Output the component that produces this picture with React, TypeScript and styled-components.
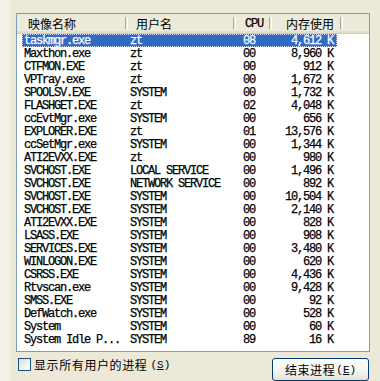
import React from "react";
import styled, { createGlobalStyle } from "styled-components";

const GlobalStyle = createGlobalStyle`
  html, body {
    margin: 0;
    padding: 0;
    background: #ece9d8;
  }
`;

const mono = `"Liberation Mono", "Noto Sans CJK SC", monospace`;
const cjk = `"Noto Sans CJK SC", "Liberation Sans", sans-serif`;

const Page = styled.div`
  width: 380px;
  height: 381px;
  box-sizing: border-box;
  padding: 13px 11px 0 16px;
  overflow: hidden;
  background: linear-gradient(to right, #f3f2ea 0, #f3f2ea 9px, #ece9d8 11px);
  display: flex;
  flex-direction: column;
`;

const ListBox = styled.div`
  width: 354px;
  height: 343px;
  box-sizing: border-box;
  border: 1px solid #7f9db9;
  background: #ffffff;
  display: flex;
  flex-direction: column;
`;

const Header = styled.div`
  height: 20px;
  box-sizing: border-box;
  display: flex;
  align-items: stretch;
  background: #ebeadb;
  border-bottom: 1px solid #d0cdbd;
  box-shadow: inset 0 -2px 0 #e2dfcf;
`;

const HeaderCell = styled.div<{ $w: number; $pad: number; $right?: boolean }>`
  width: ${(p) => p.$w}px;
  box-sizing: border-box;
  padding: ${(p) => (p.$right ? `0 ${p.$pad}px 0 0` : `0 0 0 ${p.$pad}px`)};
  display: flex;
  align-items: center;
  justify-content: ${(p) => (p.$right ? "flex-end" : "flex-start")};
  font-family: ${cjk};
  font-size: 12px;
  color: #000;
  white-space: nowrap;
`;

const MonoLabel = styled.span`
  font-family: ${mono};
  font-size: 12px;
  letter-spacing: -1.2px;
  -webkit-text-stroke: 0.25px #000;
`;

const Divider = styled.div`
  width: 1px;
  margin: 3px 0 4px;
  border-left: 1px solid #aca899;
  border-right: 1px solid #ffffff;
`;

const Rows = styled.div`
  display: flex;
  flex-direction: column;
`;

const Row = styled.div<{ $selected?: boolean }>`
  margin-left: 5px;
  width: 315px;
  height: 13px;
  box-sizing: border-box;
  display: flex;
  align-items: center;
  background: ${(p) => (p.$selected ? "#316ac5" : "transparent")};
  color: ${(p) => (p.$selected ? "#ffffff" : "#000000")};
  outline: ${(p) => (p.$selected ? "1px dotted #c9d6ee" : "none")};
  outline-offset: -1px;
  font-family: ${mono};
  font-size: 12px;
  letter-spacing: -1.2px;
  line-height: 13px;
  padding-top: 1px;
  -webkit-text-stroke: 0.25px ${(p) => (p.$selected ? "#ffffff" : "#000000")};
`;

const Cell = styled.div<{ $w: number; $pad: number; $right?: boolean }>`
  width: ${(p) => p.$w}px;
  box-sizing: border-box;
  padding: ${(p) => (p.$right ? `0 ${p.$pad}px 0 0` : `0 0 0 ${p.$pad}px`)};
  text-align: ${(p) => (p.$right ? "right" : "left")};
  white-space: pre;
  overflow: hidden;
`;

const Footer = styled.div`
  margin-top: 6px;
  display: flex;
  align-items: flex-start;
  justify-content: space-between;
  width: 353px;
`;

const CheckLabel = styled.label`
  margin-left: 2px;
  display: flex;
  align-items: center;
  gap: 3px;
  font-family: ${cjk};
  font-size: 12px;
  letter-spacing: 0.6px;
  color: #000;
  height: 13px;
`;

const CheckBox = styled.span`
  width: 13px;
  height: 13px;
  box-sizing: border-box;
  border: 1px solid #1c5180;
  background: linear-gradient(135deg, #dcdcd7 0%, #f2f2ee 60%, #ffffff 100%);
`;

const Mnemonic = styled.span`
  font-family: ${mono};
  font-size: 11px;
  letter-spacing: 0;
  u {
    text-decoration: underline;
  }
`;

const Button = styled.button`
  width: 97px;
  height: 23px;
  box-sizing: border-box;
  border: 1px solid #003c74;
  border-radius: 3px;
  background: linear-gradient(to bottom, #ffffff 0%, #f5f4ef 60%, #e3e1d6 100%);
  font-family: ${cjk};
  font-size: 12px;
  letter-spacing: 0.6px;
  color: #000;
  padding: 0;
  display: flex;
  align-items: center;
  justify-content: center;
  gap: 1px;
`;

type Proc = { name: string; user: string; cpu: string; mem: string };

const procs: Proc[] = [
  { name: "taskmgr.exe", user: "zt", cpu: "08", mem: "4,612 K" },
  { name: "Maxthon.exe", user: "zt", cpu: "00", mem: "8,960 K" },
  { name: "CTFMON.EXE", user: "zt", cpu: "00", mem: "912 K" },
  { name: "VPTray.exe", user: "zt", cpu: "00", mem: "1,672 K" },
  { name: "SPOOLSV.EXE", user: "SYSTEM", cpu: "00", mem: "1,732 K" },
  { name: "FLASHGET.EXE", user: "zt", cpu: "02", mem: "4,048 K" },
  { name: "ccEvtMgr.exe", user: "SYSTEM", cpu: "00", mem: "656 K" },
  { name: "EXPLORER.EXE", user: "zt", cpu: "01", mem: "13,576 K" },
  { name: "ccSetMgr.exe", user: "SYSTEM", cpu: "00", mem: "1,344 K" },
  { name: "ATI2EVXX.EXE", user: "zt", cpu: "00", mem: "980 K" },
  { name: "SVCHOST.EXE", user: "LOCAL SERVICE", cpu: "00", mem: "1,496 K" },
  { name: "SVCHOST.EXE", user: "NETWORK SERVICE", cpu: "00", mem: "892 K" },
  { name: "SVCHOST.EXE", user: "SYSTEM", cpu: "00", mem: "10,504 K" },
  { name: "SVCHOST.EXE", user: "SYSTEM", cpu: "00", mem: "2,140 K" },
  { name: "ATI2EVXX.EXE", user: "SYSTEM", cpu: "00", mem: "828 K" },
  { name: "LSASS.EXE", user: "SYSTEM", cpu: "00", mem: "908 K" },
  { name: "SERVICES.EXE", user: "SYSTEM", cpu: "00", mem: "3,480 K" },
  { name: "WINLOGON.EXE", user: "SYSTEM", cpu: "00", mem: "620 K" },
  { name: "CSRSS.EXE", user: "SYSTEM", cpu: "00", mem: "4,436 K" },
  { name: "Rtvscan.exe", user: "SYSTEM", cpu: "00", mem: "9,428 K" },
  { name: "SMSS.EXE", user: "SYSTEM", cpu: "00", mem: "92 K" },
  { name: "DefWatch.exe", user: "SYSTEM", cpu: "00", mem: "528 K" },
  { name: "System", user: "SYSTEM", cpu: "00", mem: "60 K" },
  { name: "System Idle P...", user: "SYSTEM", cpu: "89", mem: "16 K" },
];

export default function App() {
  return (
    <>
      <GlobalStyle />
      <Page>
        <ListBox>
          <Header>
            <HeaderCell $w={108} $pad={11}>映像名称</HeaderCell>
            <Divider />
            <HeaderCell $w={105} $pad={8}>用户名</HeaderCell>
            <Divider />
            <HeaderCell $w={33} $pad={9}>
              <MonoLabel>CPU</MonoLabel>
            </HeaderCell>
            <Divider />
            <HeaderCell $w={68} $pad={6} $right>内存使用</HeaderCell>
            <Divider />
          </Header>
          <Rows>
            {procs.map((p, i) => (
              <Row key={i} $selected={i === 0}>
                <Cell $w={103} $pad={2}>{p.name}</Cell>
                <Cell $w={107} $pad={5}>{p.user}</Cell>
                <Cell $w={35} $pad={11}>{p.cpu}</Cell>
                <Cell $w={70} $pad={4} $right>{p.mem}</Cell>
              </Row>
            ))}
          </Rows>
        </ListBox>
        <Footer>
          <CheckLabel>
            <CheckBox />
            显示所有用户的进程
            <Mnemonic>(<u>S</u>)</Mnemonic>
          </CheckLabel>
          <Button>
            结束进程
            <Mnemonic>(<u>E</u>)</Mnemonic>
          </Button>
        </Footer>
      </Page>
    </>
  );
}
